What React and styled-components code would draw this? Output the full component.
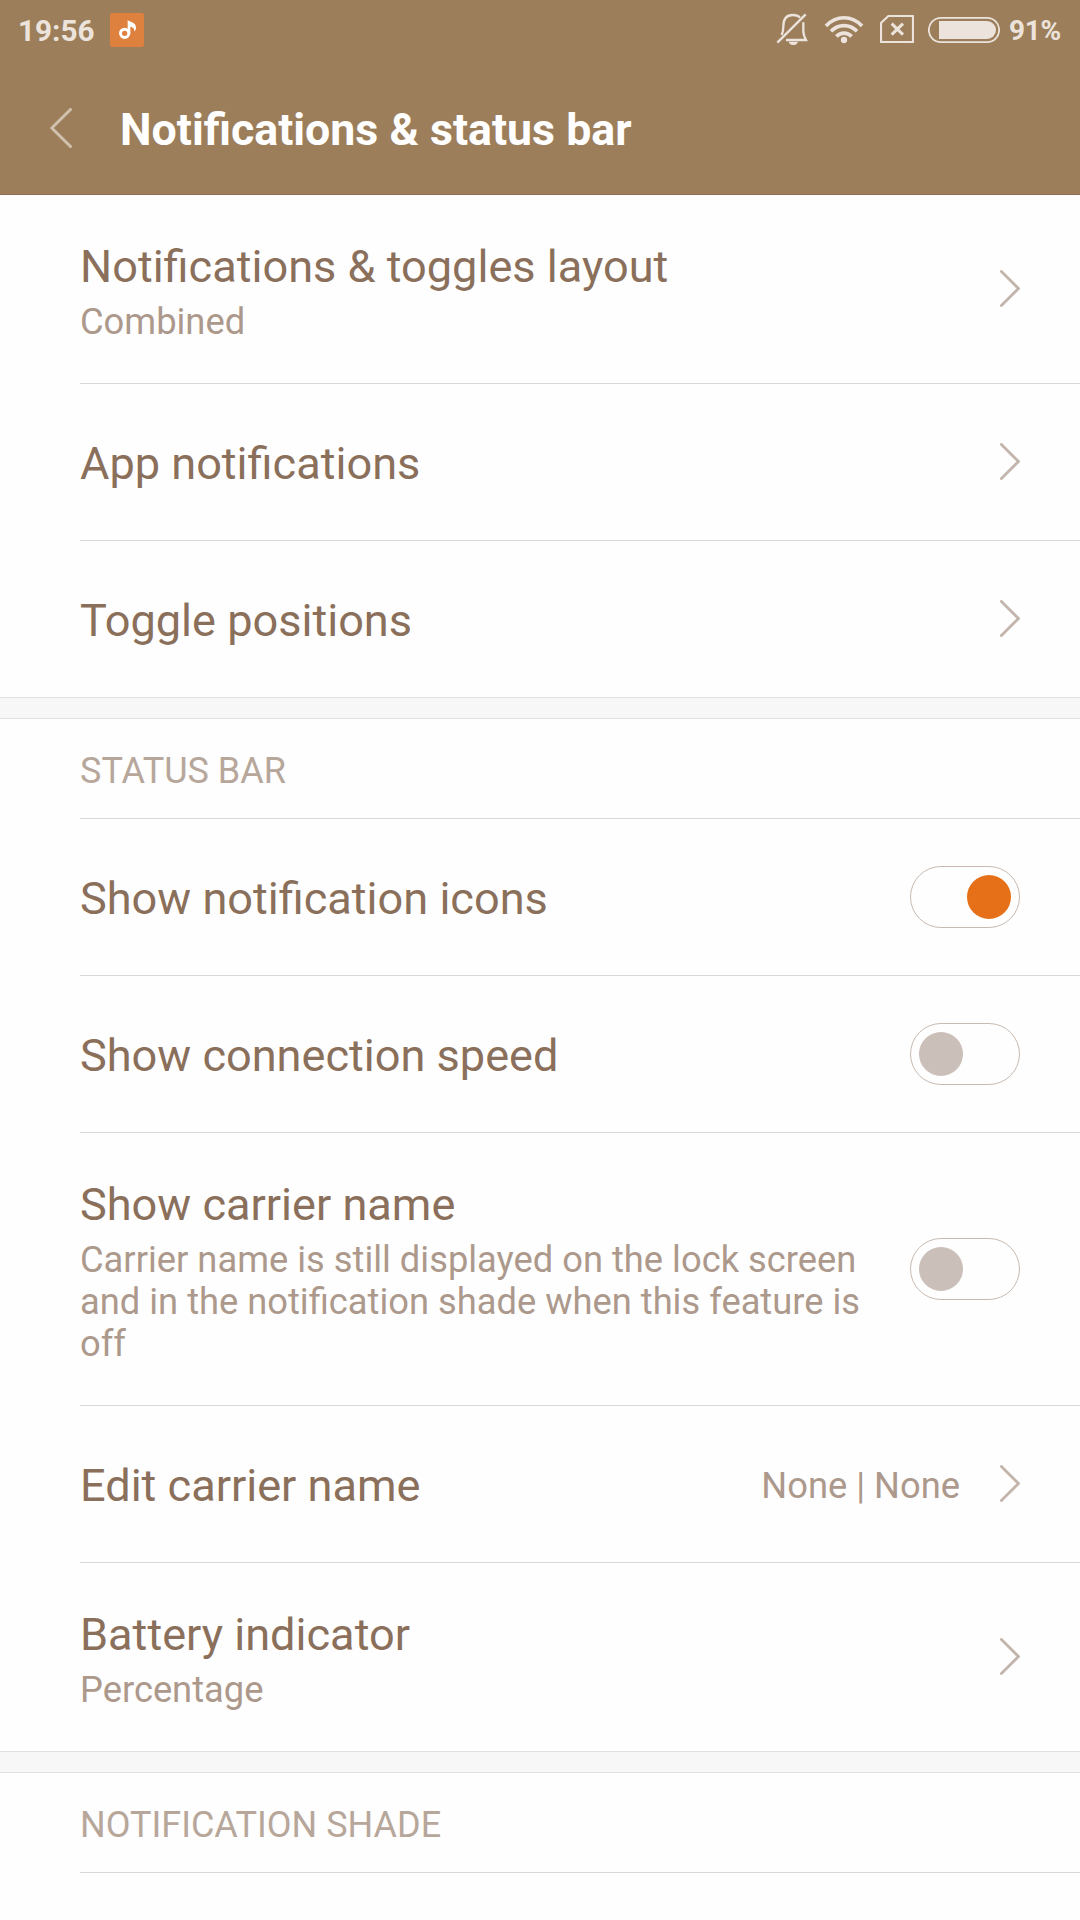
import styled, { createGlobalStyle } from "styled-components";

const GlobalStyle = createGlobalStyle`
    * {
        box-sizing: border-box;
        margin: 0;
        padding: 0;
    }
    body {
        background: #fefefe;
        font-family: Roboto, "Noto Sans", sans-serif;
        overflow: hidden;
    }
`;

const Screen = styled.main`
    width: 1080px;
    height: 1920px;
    overflow: hidden;
    background: #fefefe;
`;
const Top = styled.header`
    height: 195px;
    background: #9c7e5b;
    border-bottom: 1px solid #8f7050;
`;
const StatusBar = styled.div`
    height: 60px;
    padding: 12px 18px 0 18px;
    display: flex;
    justify-content: space-between;
    color: #ece4dc;
`;
const StatusGroup = styled.div`
    display: flex;
    align-items: flex-start;
    gap: ${({ $gap }) => $gap}px;
`;
const Clock = styled.span`
    width: 76px;
    font-size: 29.7px;
    font-weight: 700;
    line-height: 38px;
    white-space: nowrap;
`;
const Percent = styled.span`
    width: 53px;
    margin-left: -5px;
    font-size: 28px;
    font-weight: 700;
    line-height: 38px;
    letter-spacing: -0.3px;
    white-space: nowrap;
`;
const StatusIcon = styled.svg`
    display: block;
    height: 34px;
    flex: none;
`;
const MusicBadge = styled.span`
    width: 34px;
    height: 34px;
    margin-top: 1px;
    border-radius: 2px;
    background: #de803e;
    overflow: hidden;
`;
const TitleBar = styled.div`
    height: 134px;
    padding: 43px 0 0 50px;
    display: flex;
    align-items: flex-start;
`;
const BackIcon = styled.svg`
    display: block;
    width: 22px;
    height: 40px;
    margin: 5px 48px 0 0;
`;
const PageTitle = styled.h1`
    font-size: 44.7px;
    font-weight: 700;
    line-height: 54px;
    color: #fff;
    white-space: nowrap;
`;
const Section = styled.section`
    padding-left: 80px;
    border-bottom: 1px solid #e1e1e1;

    &:last-child {
        border-bottom: none;
    }
`;
const Gap = styled.div`
    height: 21px;
    background: #f7f7f7;
    border-bottom: 1px solid #e1e1e1;
`;
const SectionTitle = styled.h2`
    height: 100px;
    padding-top: 31px;
    border-bottom: 1px solid #d9d9d9;
    color: #b7a79b;
    font-size: 36px;
    font-weight: 400;
    line-height: 42px;
    text-transform: uppercase;
`;
const Row = styled.div`
    display: flex;
    align-items: center;
    padding-right: 60px;
    border-bottom: 1px solid #d9d9d9;

    &:last-child {
        border-bottom: none;
    }
`;
const Label = styled.div`
    flex: 1;
    padding: ${({ $tall }) => ($tall ? "45px 0 40px" : "53px 0 49px")};
`;
const Name = styled.p`
    font-size: 45.1px;
    line-height: 54px;
    color: #8a6f5b;
`;
const Note = styled.p`
    width: 790px;
    margin-top: 7px;
    font-size: 36.3px;
    line-height: 42px;
    color: #ac998c;
`;
const Value = styled.span`
    padding-top: 4px;
    margin-right: 40px;
    font-size: 36.3px;
    line-height: 42px;
    color: #ac998c;
`;
const ArrowIcon = styled.svg`
    display: block;
    width: 20px;
    height: 37px;
    margin-bottom: 1px;
    flex: none;
`;
const Switch = styled.button`
    width: 110px;
    height: 62px;
    padding: 0 8px;
    display: flex;
    flex: none;
    align-items: center;
    justify-content: ${({ $on }) => ($on ? "flex-end" : "flex-start")};
    border: 1px solid #c8bab0;
    border-radius: 31px;
    background: transparent;
`;
const Knob = styled.span`
    width: 44px;
    height: 44px;
    border-radius: 50%;
    background: ${({ $on }) => ($on ? "#e57017" : "#cabfb9")};
`;

function Arrow() {
    return (
        <ArrowIcon viewBox="0 0 20 37" fill="none" stroke="#c3b5ab" strokeWidth="2.8" strokeLinecap="round">
            <path d="M1.4 1.4 18.4 18.5 1.4 35.6" />
        </ArrowIcon>
    );
}

function Setting({ name, note, value, toggle }) {
    return (
        <Row>
            <Label $tall={!!note}>
                <Name>{name}</Name>
                {note && <Note>{note}</Note>}
            </Label>
            {value && <Value>{value}</Value>}
            {toggle === undefined ? (
                <Arrow />
            ) : (
                <Switch type="button" role="switch" aria-checked={toggle} aria-label={name} $on={toggle}>
                    <Knob $on={toggle} />
                </Switch>
            )}
        </Row>
    );
}

function StatusIcons() {
    return (
        <>
            <StatusGroup $gap={16}>
                <StatusIcon viewBox="48 36 96 102" width="32" fill="none" stroke="currentColor" strokeWidth="7">
                    <path d="M65 105 C69 97 70 91 70 79 C70 57 80 45 98 45 C108 45 115 47 120 53" />
                    <path d="M130 67 L130 94 C130 106 134 112 138 120 L78 120" />
                    <path d="M52 128 137 43" />
                    <path d="M86 125 L114 125 C112 132 107 135 100 135 C93 135 88 132 86 125Z" fill="currentColor" stroke="none" />
                </StatusIcon>
                <StatusIcon viewBox="192 36 120 102" width="40" fill="none" stroke="currentColor" strokeWidth="11">
                    <path d="M198 78 C228 45 276 45 306 78" />
                    <path d="M213 94 C235 71 269 71 291 94" />
                    <path d="M229 109 C242 96 262 96 275 109" />
                    <circle cx="252" cy="120" r="9.5" fill="currentColor" stroke="none" />
                </StatusIcon>
                <StatusIcon viewBox="360 36 102 102" width="34" fill="none" stroke="currentColor" strokeWidth="6.5">
                    <path d="M385 48 L459 48 L459 126 L363 126 L363 69Z" strokeLinejoin="round" />
                    <path d="M395 71 429 104 M429 71 395 104" strokeWidth="9" />
                </StatusIcon>
            </StatusGroup>
            <StatusIcon viewBox="504 36 216 102" width="72">
                <rect x="506.5" y="53.5" width="211" height="73" rx="36.5" fill="none" stroke="currentColor" strokeWidth="5.5" />
                <path d="M537 63 H681 A27 27 0 0 1 681 117 H537Z" fill="currentColor" />
            </StatusIcon>
        </>
    );
}

function App() {
    return (
        <Screen>
            <GlobalStyle />
            <Top>
                <StatusBar>
                    <StatusGroup $gap={16}>
                        <Clock>19:56</Clock>
                        <MusicBadge>
                            <StatusIcon viewBox="330 39 102 102" width="34">
                                <circle cx="374" cy="100" r="12.5" fill="none" stroke="#fff" strokeWidth="9" />
                                <path d="M383 60 C388 66 408 66 408 83 C408 88 406 92 402 94 C404 86 399 81 391 81 L391 102 L383 94Z" fill="#fff" />
                            </StatusIcon>
                        </MusicBadge>
                    </StatusGroup>
                    <StatusGroup $gap={14}>
                        <StatusIcons />
                        <Percent>91%</Percent>
                    </StatusGroup>
                </StatusBar>
                <TitleBar>
                    <BackIcon viewBox="0 0 22 40" fill="none" stroke="#d0c1ae" strokeWidth="3" strokeLinecap="round" strokeLinejoin="round">
                        <path d="M20.5 1.5 1.8 20 20.5 38.5" />
                    </BackIcon>
                    <PageTitle>Notifications &amp; status bar</PageTitle>
                </TitleBar>
            </Top>
            <Section>
                <Setting name="Notifications & toggles layout" note="Combined" />
                <Setting name="App notifications" />
                <Setting name="Toggle positions" />
            </Section>
            <Gap />
            <Section>
                <SectionTitle>Status bar</SectionTitle>
                <Setting name="Show notification icons" toggle={true} />
                <Setting name="Show connection speed" toggle={false} />
                <Setting
                    name="Show carrier name"
                    note="Carrier name is still displayed on the lock screen and in the notification shade when this feature is off"
                    toggle={false}
                />
                <Setting name="Edit carrier name" value="None | None" />
                <Setting name="Battery indicator" note="Percentage" />
            </Section>
            <Gap />
            <Section>
                <SectionTitle>Notification shade</SectionTitle>
            </Section>
        </Screen>
    );
}

export default App;
